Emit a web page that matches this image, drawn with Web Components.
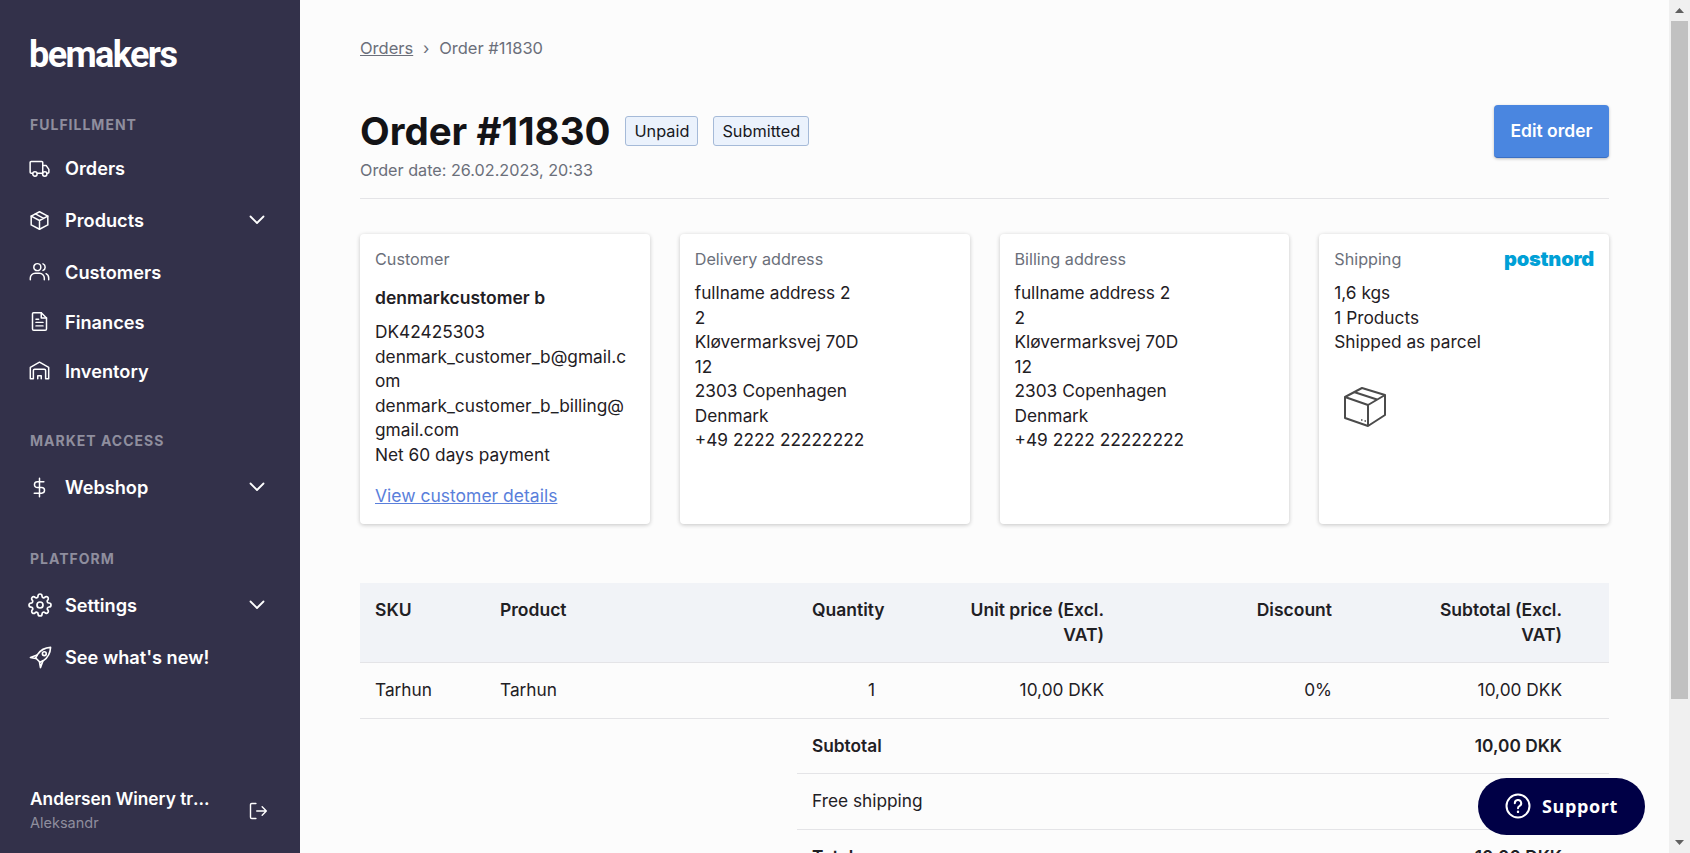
<!DOCTYPE html>
<html lang="en">
<head>
<meta charset="utf-8">
<title>Order #11830</title>
<style>
html, body { margin: 0; height: 100%; overflow: hidden; }
body { font-family: Inter, "Liberation Sans", sans-serif; font-size: 17.300px; color: #1f2024; background: #fcfcfc; }
.app { display: flex; height: 853px; overflow: hidden; }
</style>
</head>
<body>
<div class="app">
  <app-sidebar>
    <nav-section label="FULFILLMENT" top="0" gap="4">
      <nav-item icon="truck">Orders</nav-item>
      <nav-item icon="cube" chevron>Products</nav-item>
      <nav-item icon="users" style="--h:51px">Customers</nav-item>
      <nav-item icon="doc" style="--h:49px">Finances</nav-item>
      <nav-item icon="warehouse" style="--h:49px">Inventory</nav-item>
    </nav-section>
    <nav-section label="MARKET ACCESS" top="33" gap="7">
      <nav-item icon="dollar" chevron>Webshop</nav-item>
    </nav-section>
    <nav-section label="PLATFORM" top="33" gap="6">
      <nav-item icon="cog" size="24" chevron style="--h:53px;--shift:-1px">Settings</nav-item>
      <nav-item icon="rocket" size="23">See what's new!</nav-item>
    </nav-section>
  </app-sidebar>
  <order-page>
    <bread-crumbs current="Order #11830">Orders</bread-crumbs>
    <order-header number="11830" date="Order date: 26.02.2023, 20:33"></order-header>
    <card-grid>
      <info-card title="Customer">
        <!-- the top margin collapses with the 12px under the card heading -->
        <div style="font-weight:600;font-size:17.500px;margin:17px 0 9.500px">denmarkcustomer b</div>
        <div>DK42425303<br>denmark_customer_b@gmail.com<br>denmark_customer_b_billing@<br>gmail.com<br>Net 60 days payment</div>
        <a href="#" style="display:block;margin-top:17px;font-size:17.500px;color:#5a7fdb">View customer details</a>
      </info-card>
      <info-card title="Delivery address">fullname address 2<br>2<br>Kløvermarksvej 70D<br>12<br>2303 Copenhagen<br>Denmark<br>+49 2222 22222222</info-card>
      <info-card title="Billing address">fullname address 2<br>2<br>Kløvermarksvej 70D<br>12<br>2303 Copenhagen<br>Denmark<br>+49 2222 22222222</info-card>
      <info-card title="Shipping" carrier="postnord">1,6 kgs<br>1 Products<br>Shipped as parcel
        <svg width="42" height="40" viewBox="0 0 42 40" fill="none" stroke="#4b4b4b" stroke-width="2" stroke-linejoin="round" style="display:block;margin:32px 0 0 10px">
          <path d="M18 1 41 8V28L24 39 1 31V10z"/><path d="M1 10 24 18 41 8"/><path d="M24 18V39"/><path d="M10 5 33 12.500"/><path d="M17 33h1.500M20.500 34h1.500" stroke-width="1.300"/>
        </svg>
      </info-card>
    </card-grid>
    <order-table></order-table>
  </order-page>
  <fake-scrollbar></fake-scrollbar>
</div>
<support-button>Support</support-button>

<script>
// Outline icons for the sidebar, all on a 24 box
const ICONS = {
  truck: '<path d="M4 17.500H2.500a1.200 1.200 0 0 1-1.200-1.200V5.200A1.200 1.200 0 0 1 2.500 4h12a1.200 1.200 0 0 1 1.200 1.200v12.300M9.500 17.500h6.200M15.700 8.500h3.800l3.200 4.500v3.300a1.200 1.200 0 0 1-1.200 1.200h-.8"/><circle cx="6.800" cy="18.300" r="2.500"/><circle cx="18" cy="18.300" r="2.500"/>',
  cube: '<path d="M12 2 21.500 7v10L12 22 2.500 17V7z"/><path d="M2.500 7 12 12l9.500-5M12 12v10M7.300 4.500 16.800 9.500"/>',
  users: '<circle cx="9.500" cy="7" r="4"/><path d="M1.500 21.500v-2a5.500 5.500 0 0 1 5.500-5.500h5a5.500 5.500 0 0 1 5.500 5.500v2M16 3.300a4 4 0 0 1 0 7.400M19.500 14.500a5.500 5.500 0 0 1 3 5v2"/>',
  doc: '<path d="M6 2h8l6 6v12.500A1.500 1.500 0 0 1 18.500 22h-13A1.500 1.500 0 0 1 4 20.500v-17A1.500 1.500 0 0 1 6 2z"/><path d="M14 2v6h6M8 9.500h3M8 13h8M8 17h8"/>',
  warehouse: '<path d="M1.500 21.500V8.500L12 2.500l10.500 6v13h-3.500V12a1.500 1.500 0 0 0-1.500-1.500h-11A1.500 1.500 0 0 0 5 12v9.500z"/><path d="M10 21.500v-3.500h4v3.500"/>',
  dollar: '<path d="M12 1.500v21M17 5.500H9.500a3.250 3.250 0 0 0 0 6.500h5a3.250 3.250 0 0 1 0 6.500H6"/>',
  cog: '<circle cx="12" cy="12" r="3"/><path d="M19.400 15a1.650 1.650 0 0 0 .33 1.820l.06.06a2 2 0 0 1 0 2.830 2 2 0 0 1-2.830 0l-.06-.06a1.650 1.650 0 0 0-1.820-.33 1.650 1.650 0 0 0-1 1.510V21a2 2 0 0 1-2 2 2 2 0 0 1-2-2v-.09A1.650 1.650 0 0 0 9 19.400a1.650 1.650 0 0 0-1.820.33l-.06.06a2 2 0 0 1-2.830 0 2 2 0 0 1 0-2.830l.06-.06a1.650 1.650 0 0 0 .33-1.820 1.650 1.650 0 0 0-1.510-1H3a2 2 0 0 1-2-2 2 2 0 0 1 2-2h.09A1.650 1.650 0 0 0 4.600 9a1.650 1.650 0 0 0-.33-1.820l-.06-.06a2 2 0 0 1 0-2.830 2 2 0 0 1 2.830 0l.06.06a1.650 1.650 0 0 0 1.820.33H9a1.650 1.650 0 0 0 1-1.510V3a2 2 0 0 1 2-2 2 2 0 0 1 2 2v.09a1.650 1.650 0 0 0 1 1.510 1.650 1.650 0 0 0 1.820-.33l.06-.06a2 2 0 0 1 2.830 0 2 2 0 0 1 0 2.830l-.06.06a1.650 1.650 0 0 0-.33 1.820V9a1.650 1.650 0 0 0 1.510 1H21a2 2 0 0 1 2 2 2 2 0 0 1-2 2h-.09a1.650 1.650 0 0 0-1.510 1z"/>',
  rocket: '<path d="M22.500 1.500c-6 .3-10.500 2.800-13.700 7.500L7 12.500l4.500 4.500 3.500-1.800c4.700-3.200 7.200-7.700 7.500-13.700z"/><path d="M8.500 9.500 1.500 12l5.500 1M14.500 15.500 12 22.500l-1-5.500"/><circle cx="16" cy="8" r="2"/>',
  logout: '<path d="M9.500 3H4.500A1.500 1.500 0 0 0 3 4.500v15A1.500 1.500 0 0 0 4.500 21h5M10.500 12H22M17 7l5 5-5 5"/>'
};

function iconSvg(name, size) {
  return `<svg width="${size}" height="${size}" viewBox="0 0 24 24" fill="none" stroke="currentColor" stroke-width="1.700" stroke-linecap="round" stroke-linejoin="round">${ICONS[name]}</svg>`;
}

class AppSidebar extends HTMLElement {
  constructor() {
    super();
    this.attachShadow({ mode: 'open' });
    this.shadowRoot.innerHTML = `
      <style>
        :host { display: flex; flex-direction: column; flex: none; width: 300px; height: 853px; background: #33314a; color: #fff; }
        .logo { font: 700 36px/40px Roboto, sans-serif; letter-spacing: -1.600px; padding: 35px 0 0 29px; height: 73px; }
        nav { flex: 1; padding-top: 4px; }
        .user { display: flex; align-items: center; justify-content: space-between; padding: 0 32px 18px 30px; }
        .name { font-weight: 600; font-size: 17.300px; line-height: 24px; width: 182px; white-space: nowrap; overflow: hidden; text-overflow: ellipsis; }
        .login { color: #8f8e9e; font-size: 14.500px; line-height: 24px; }
        .exit { display: flex; }
      </style>
      <div class="logo">bemakers</div>
      <nav><slot></slot></nav>
      <div class="user">
        <div>
          <div class="name">Andersen Winery trading</div>
          <div class="login">Aleksandr</div>
        </div>
        <span class="exit">${iconSvg('logout', 20)}</span>
      </div>
    `;
  }
}

class NavSection extends HTMLElement {
  constructor() {
    super();
    this.attachShadow({ mode: 'open' });
    this.shadowRoot.innerHTML = `
      <style>
        :host { display: block; }
        .label { padding-left: 30px; height: 26px; font-size: 14px; line-height: 26px; font-weight: 700; letter-spacing: 1px; color: #8f8e9e; }
      </style>
      <div class="label"></div>
      <slot></slot>
    `;
  }
  connectedCallback() {
    this.style.marginTop = (this.getAttribute('top') || 0) + 'px';
    const label = this.shadowRoot.querySelector('.label');
    label.textContent = this.getAttribute('label');
    label.style.marginBottom = (this.getAttribute('gap') || 0) + 'px';
  }
}

class NavItem extends HTMLElement {
  constructor() {
    super();
    this.attachShadow({ mode: 'open' });
  }
  connectedCallback() {
    const chevron = this.hasAttribute('chevron')
      ? '<svg class="chev" width="16" height="10" viewBox="0 0 16 10" fill="none" stroke="currentColor" stroke-width="1.800" stroke-linecap="round" stroke-linejoin="round"><path d="M1.500 1.500 8 8l6.500-6.500"/></svg>'
      : '';
    const size = this.getAttribute('size') || 21;
    this.shadowRoot.innerHTML = `
      <style>
        :host { display: flex; align-items: center; height: var(--h, 52px); padding: 0 35px 0 29px; color: #fff; font-size: 18.200px; font-weight: 600; }
        .icon { display: flex; width: 36px; flex: none; margin-left: var(--shift, 0); margin-right: calc(0px - var(--shift, 0px)); }
        .text { flex: 1; }
      </style>
      <span class="icon">${iconSvg(this.getAttribute('icon'), size)}</span>
      <span class="text"><slot></slot></span>
      ${chevron}
    `;
  }
}

class OrderPage extends HTMLElement {
  constructor() {
    super();
    this.attachShadow({ mode: 'open' });
    this.shadowRoot.innerHTML = `
      <style>
        :host { display: block; flex: 1; min-width: 0; padding: 0 60px; background: #fcfcfc; overflow: hidden; }
      </style>
      <slot></slot>
    `;
  }
}

class BreadCrumbs extends HTMLElement {
  constructor() {
    super();
    this.attachShadow({ mode: 'open' });
  }
  connectedCallback() {
    this.shadowRoot.innerHTML = `
      <style>
        :host { display: flex; align-items: center; height: 24px; padding-top: 36px; color: #6b6f7a; font-size: 16.500px; }
        a { color: inherit; }
        .sep { width: 26px; text-align: center; }
      </style>
      <a href="#"><slot></slot></a>
      <span class="sep">›</span>
      <span>${this.getAttribute('current')}</span>
    `;
  }
}

class OrderHeader extends HTMLElement {
  constructor() {
    super();
    this.attachShadow({ mode: 'open' });
  }
  connectedCallback() {
    this.shadowRoot.innerHTML = `
      <style>
        :host { display: flex; justify-content: space-between; padding-top: 45px; height: 93px; border-bottom: 1px solid #e4e4e7; }
        .row { display: flex; align-items: center; height: 44px; margin-top: 4px; }
        h1 { margin: 0; font-size: 38.500px; line-height: 44px; font-weight: 700; color: #131316; }
        .badge { display: flex; align-items: center; height: 28px; padding: 0 8px; margin-right: 15px; font-size: 16.300px; color: #17181c; background: #ebf2fc; border: 1px solid #a5bad8; border-radius: 3px; }
        h1 + .badge { margin-left: 15px; }
        .date { color: #6b6f7a; font-size: 16.200px; line-height: 24px; margin-top: 5px; }
        button { width: 115px; height: 53px; margin-top: 0; padding: 0 0 2px; border: 0; border-bottom: 1px solid #3a6fc4; border-radius: 4px; background: #4a86e0; color: #fff; font: 600 17.500px Inter, sans-serif; box-shadow: 0 1px 3px rgba(0,0,0,.25); }
      </style>
      <div>
        <div class="row">
          <h1>Order #${this.getAttribute('number')}</h1>
          <span class="badge">Unpaid</span>
          <span class="badge">Submitted</span>
        </div>
        <div class="date">${this.getAttribute('date')}</div>
      </div>
      <button type="button">Edit order</button>
    `;
  }
}

class CardGrid extends HTMLElement {
  constructor() {
    super();
    this.attachShadow({ mode: 'open' });
    this.shadowRoot.innerHTML = `
      <style>
        :host { display: grid; grid-template-columns: repeat(4, 1fr); gap: 30px; margin-top: 35px; }
      </style>
      <slot></slot>
    `;
  }
}

class InfoCard extends HTMLElement {
  constructor() {
    super();
    this.attachShadow({ mode: 'open' });
  }
  connectedCallback() {
    const carrier = this.getAttribute('carrier');
    this.shadowRoot.innerHTML = `
      <style>
        :host { display: block; box-sizing: border-box; height: 290px; padding: 15px; background: #fff; border-radius: 4px; box-shadow: 0 1px 4px rgba(0,0,0,.22); font-size: 17.300px; line-height: 24.500px; overflow-wrap: anywhere; }
        .head { display: flex; justify-content: space-between; align-items: center; height: 20px; margin-bottom: 12px; color: #6b6f7a; font-size: 16.200px; }
        .carrier { font: 900 20px/20px Inter, sans-serif; color: #00a0d6; letter-spacing: -0.200px; }
      </style>
      <div class="head"><span>${this.getAttribute('title')}</span>${carrier ? `<span class="carrier">${carrier}</span>` : ''}</div>
      <slot></slot>
    `;
  }
}

class OrderTable extends HTMLElement {
  constructor() {
    super();
    this.attachShadow({ mode: 'open' });
    this.shadowRoot.innerHTML = `
      <style>
        :host { display: block; margin-top: 59px; }
        table { width: 100%; table-layout: fixed; border-collapse: collapse; font-size: 17.300px; line-height: 24.500px; }
        th, td { padding: 15px; text-align: left; }
        thead th { background: #f1f3f7; font-size: 17.500px; font-weight: 600; border-bottom: 1px solid #e4e4e7; vertical-align: top; }
        .r { text-align: right; }
        .nw { white-space: nowrap; }
        .line td { border-bottom: 1px solid #e4e4e7; }
        .sum td { border-bottom: 1px solid #e4e4e7; }
        .sum td.none, .sum:last-child td { border-bottom: 0; }
        .b { font-weight: 600; }
      </style>
      <table>
        <colgroup><col style="width:125px"><col style="width:312px"><col style="width:93px"><col style="width:229px"><col style="width:228px"><col style="width:230px"><col></colgroup>
        <thead>
          <tr><th>SKU</th><th>Product</th><th class="nw">Quantity</th><th class="r">Unit price (Excl.<br>VAT)</th><th class="r">Discount</th><th class="r">Subtotal (Excl.<br>VAT)</th><th></th></tr>
        </thead>
        <tbody>
          <tr class="line"><td>Tarhun</td><td>Tarhun</td><td class="r">1</td><td class="r">10,00 DKK</td><td class="r">0%</td><td class="r">10,00 DKK</td><td></td></tr>
          <tr class="sum"><td class="none" colspan="2"></td><td class="b" colspan="3">Subtotal</td><td class="r b">10,00 DKK</td><td></td></tr>
          <tr class="sum"><td class="none" colspan="2"></td><td colspan="3">Free shipping</td><td></td><td></td></tr>
          <tr class="sum"><td class="none" colspan="2"></td><td class="b" colspan="3">Total</td><td class="r b">10,00 DKK</td><td></td></tr>
        </tbody>
      </table>
    `;
  }
}

class FakeScrollbar extends HTMLElement {
  constructor() {
    super();
    this.attachShadow({ mode: 'open' });
    this.shadowRoot.innerHTML = `
      <style>
        :host { display: flex; flex-direction: column; flex: none; width: 21px; height: 853px; background: #f0f0f0; }
        .btn { display: flex; align-items: center; justify-content: center; height: 21px; flex: none; }
        .thumb { height: 678px; margin: 0 2px; background: #c1c1c1; }
        .gap { flex: 1; }
      </style>
      <div class="btn"><svg width="9" height="5"><path d="M4.500 0 9 5H0z" fill="#606060"/></svg></div>
      <div class="thumb"></div>
      <div class="gap"></div>
      <div class="btn"><svg width="9" height="5"><path d="M0 0h9L4.500 5z" fill="#606060"/></svg></div>
    `;
  }
}

class SupportButton extends HTMLElement {
  constructor() {
    super();
    this.attachShadow({ mode: 'open' });
    this.shadowRoot.innerHTML = `
      <style>
        :host { position: fixed; left: 1478px; top: 778px; box-sizing: border-box; display: flex; align-items: center; justify-content: center; gap: 11px; width: 167px; height: 57px; padding-bottom: 2px; border-radius: 29px; background: #000046; color: #fff; font: 700 18px "Open Sans", sans-serif; letter-spacing: 0.600px; }
        svg { flex: none; }
      </style>
      <svg width="26" height="26" viewBox="0 0 26 26" fill="none" stroke="#fff" stroke-width="2" stroke-linecap="round">
        <circle cx="13" cy="13" r="11.500"/><path d="M9.800 10.200a3.200 3.200 0 1 1 4.600 2.900c-1 .5-1.400 1.100-1.400 2.200"/><path d="M13 18.800v.1" stroke-width="2.400"/>
      </svg>
      <slot></slot>
    `;
  }
}

customElements.define('app-sidebar', AppSidebar);
customElements.define('nav-section', NavSection);
customElements.define('nav-item', NavItem);
customElements.define('order-page', OrderPage);
customElements.define('bread-crumbs', BreadCrumbs);
customElements.define('order-header', OrderHeader);
customElements.define('card-grid', CardGrid);
customElements.define('info-card', InfoCard);
customElements.define('order-table', OrderTable);
customElements.define('fake-scrollbar', FakeScrollbar);
customElements.define('support-button', SupportButton);
</script>
</body>
</html>
